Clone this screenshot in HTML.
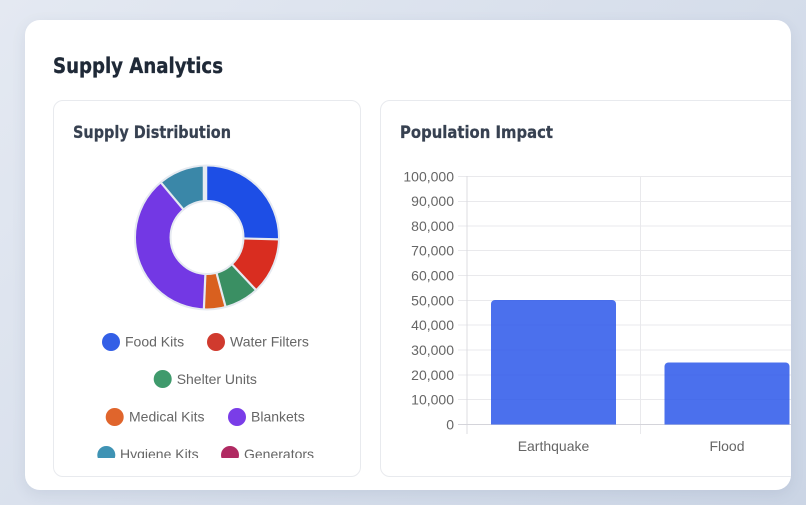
<!DOCTYPE html>
<html lang="en"><head><meta charset="utf-8"><title>Supply Analytics</title>
<style>
html,body{margin:0;padding:0;width:806px;height:505px;overflow:hidden}
html{background:#d9e0ec}
body{background:linear-gradient(135deg,#e4e9f2 0%,#cbd5e5 100%);position:relative}
#wrap{position:absolute;left:0;top:0;width:806px;height:505px;filter:blur(.35px)}
#card{position:absolute;left:25px;top:20px;width:766px;height:470px;background:#fff;border-radius:15px;box-shadow:0 4px 14px rgba(60,80,120,.10);overflow:hidden}
.panel{position:absolute;background:#fff;border:1px solid #e8eaee;border-radius:10px;box-sizing:border-box}
svg{position:absolute;left:0;top:0}
text{font-family:"Liberation Sans",Arial,sans-serif;font-size:14px;fill:#666}
.h{font-family:"DejaVu Sans",sans-serif;font-weight:700}
</style></head><body>
<div id="wrap">
<div id="card">
<div class="panel" style="left:28px;top:80px;width:308px;height:377px"></div>
<div class="panel" style="left:355px;top:80px;width:500px;height:377px"></div>
</div>
<svg width="806" height="505" viewBox="0 0 806 505">
<defs><clipPath id="leg"><rect x="60" y="325" width="290" height="133"/></clipPath>
<clipPath id="cc"><rect x="381" y="100" width="410" height="376"/></clipPath></defs>
<text class="h" x="53" y="73" style="font-size:21px;fill:#1f2937;stroke:#1f2937;stroke-width:.35px" textLength="170" lengthAdjust="spacingAndGlyphs">Supply Analytics</text>
<text class="h" x="73" y="138" style="font-size:16.5px;fill:#374151;stroke:#374151;stroke-width:.25px" textLength="158" lengthAdjust="spacingAndGlyphs">Supply Distribution</text>
<text class="h" x="400" y="138" style="font-size:16.5px;fill:#374151;stroke:#374151;stroke-width:.25px" textLength="153" lengthAdjust="spacingAndGlyphs">Population Impact</text>

<g transform="rotate(-90 207 237.5)" fill="none" stroke-width="36">
<circle cx="207" cy="237.5" r="54.5" pathLength="360" stroke="#1d4ee6" stroke-dasharray="91 360" stroke-dashoffset="0"/>
<circle cx="207" cy="237.5" r="54.5" pathLength="360" stroke="#d92d20" stroke-dasharray="46 360" stroke-dashoffset="-91"/>
<circle cx="207" cy="237.5" r="54.5" pathLength="360" stroke="#3a8f63" stroke-dasharray="28 360" stroke-dashoffset="-137"/>
<circle cx="207" cy="237.5" r="54.5" pathLength="360" stroke="#d9601f" stroke-dasharray="18 360" stroke-dashoffset="-165"/>
<circle cx="207" cy="237.5" r="54.5" pathLength="360" stroke="#7338e4" stroke-dasharray="137 360" stroke-dashoffset="-183"/>
<circle cx="207" cy="237.5" r="54.5" pathLength="360" stroke="#3a87a8" stroke-dasharray="38 360" stroke-dashoffset="-320"/>
</g>
<g stroke="#e6eaf1" stroke-width="2" fill="none">
<circle cx="207" cy="237.5" r="72"/>
<circle cx="207" cy="237.5" r="36.5" fill="#fff"/>
<g stroke-width="2.2">
<line x1="207" y1="201" x2="207" y2="165" transform="rotate(91.5 207 237.5)"/>
<line x1="207" y1="201" x2="207" y2="165" transform="rotate(137 207 237.5)"/>
<line x1="207" y1="201" x2="207" y2="165" transform="rotate(165 207 237.5)"/>
<line x1="207" y1="201" x2="207" y2="165" transform="rotate(182.5 207 237.5)"/>
<line x1="207" y1="201" x2="207" y2="165" transform="rotate(320 207 237.5)"/>
</g>
<line x1="205" y1="201" x2="205" y2="165" stroke-width="4.5"/>
</g>

<g clip-path="url(#leg)">
<circle cx="111" cy="342" r="9" fill="#335fe6"/><text x="125" y="346.5">Food Kits</text>
<circle cx="216" cy="342" r="9" fill="#d03a2e"/><text x="230" y="346.5">Water Filters</text>
<circle cx="162.7" cy="379" r="9" fill="#3f9a6c"/><text x="176.7" y="384">Shelter Units</text>
<circle cx="114.7" cy="417" r="9" fill="#e0652c"/><text x="129" y="421.5">Medical Kits</text>
<circle cx="237" cy="417" r="9" fill="#7a3de8"/><text x="251" y="421.5">Blankets</text>
<circle cx="106.3" cy="455" r="9" fill="#3f93b4"/><text x="120" y="459">Hygiene Kits</text>
<circle cx="230" cy="455" r="9" fill="#b02a62"/><text x="244" y="459">Generators</text>
</g>

<g clip-path="url(#cc)">
<g stroke="#e9e9ec" stroke-width="1">
<line x1="458" x2="791" y1="176.5" y2="176.5"/>
<line x1="458" x2="791" y1="201.5" y2="201.5"/>
<line x1="458" x2="791" y1="226" y2="226"/>
<line x1="458" x2="791" y1="250.5" y2="250.5"/>
<line x1="458" x2="791" y1="275.5" y2="275.5"/>
<line x1="458" x2="791" y1="300.5" y2="300.5"/>
<line x1="458" x2="791" y1="325" y2="325"/>
<line x1="458" x2="791" y1="350" y2="350"/>
<line x1="458" x2="791" y1="375" y2="375"/>
<line x1="458" x2="791" y1="399.5" y2="399.5"/>
<line x1="640.5" x2="640.5" y1="176" y2="434"/>
</g>
<line x1="467" x2="467" y1="176" y2="434" stroke="#dcdce0"/>
<line x1="458" x2="791" y1="424.5" y2="424.5" stroke="#d4d4da"/>
<path d="M491 424.5V304a4 4 0 0 1 4-4H612a4 4 0 0 1 4 4V424.5Z" fill="#2b57ea" fill-opacity=".85"/>
<path d="M664.5 424.5V366.5a4 4 0 0 1 4-4H785.5a4 4 0 0 1 4 4V424.5Z" fill="#2b57ea" fill-opacity=".85"/>
</g>
<g text-anchor="end">
<text x="454" y="181.5">100,000</text>
<text x="454" y="206">90,000</text>
<text x="454" y="231">80,000</text>
<text x="454" y="255.5">70,000</text>
<text x="454" y="280.5">60,000</text>
<text x="454" y="305.5">50,000</text>
<text x="454" y="330">40,000</text>
<text x="454" y="355">30,000</text>
<text x="454" y="380">20,000</text>
<text x="454" y="404.5">10,000</text>
<text x="454" y="429.5">0</text>
</g>
<text x="553.5" y="451" text-anchor="middle">Earthquake</text>
<text x="727" y="451" text-anchor="middle">Flood</text>
</svg>
</div>
</body></html>
